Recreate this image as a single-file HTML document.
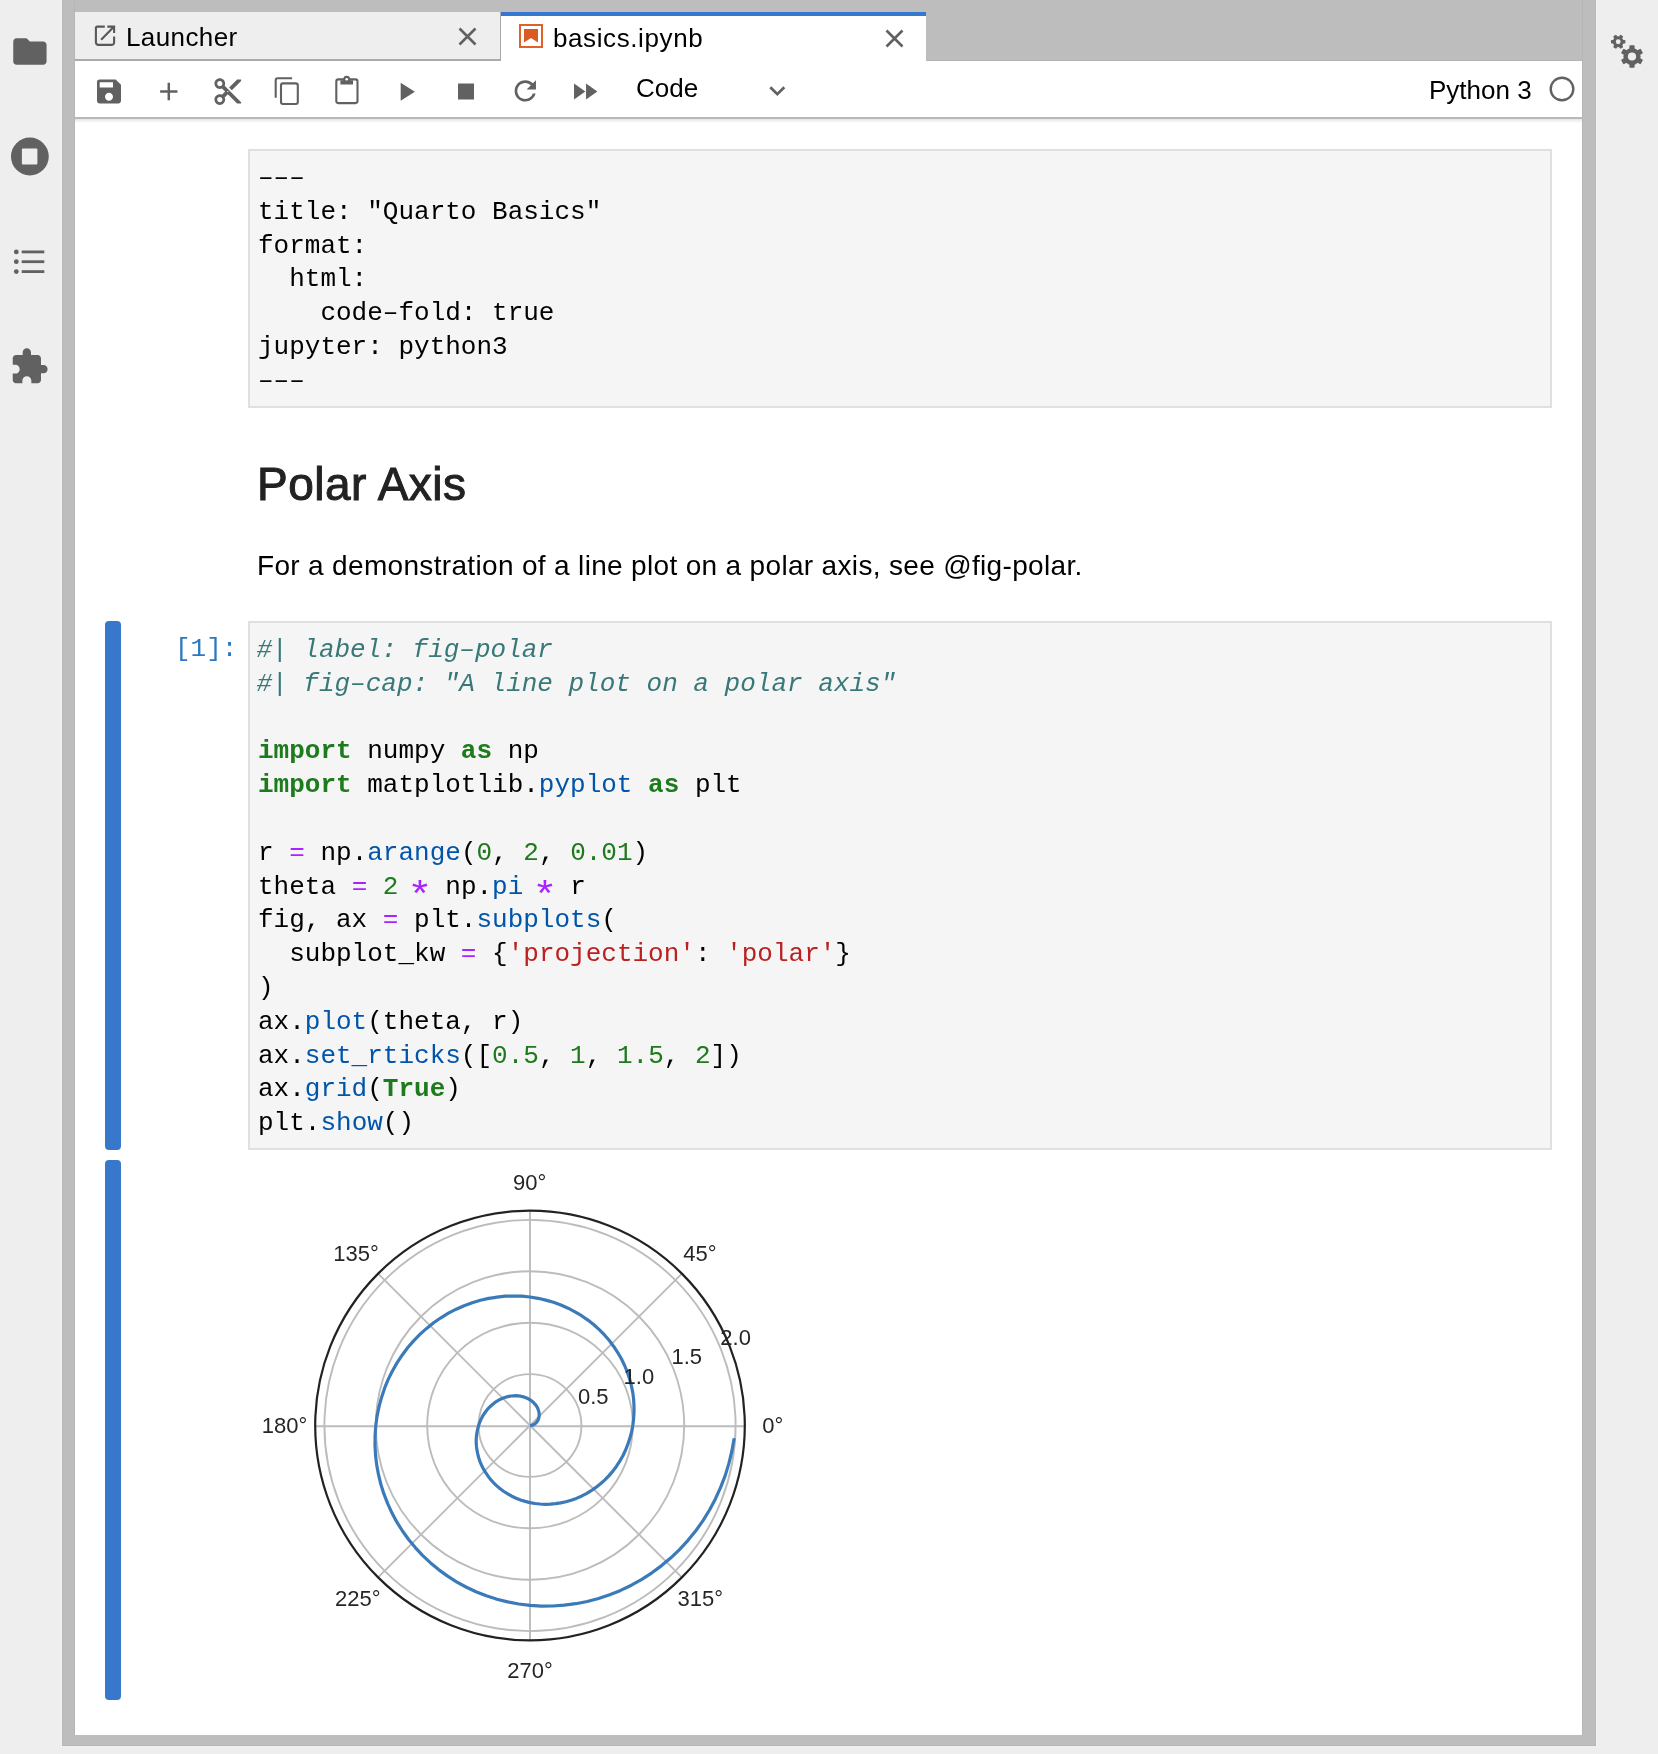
<!DOCTYPE html>
<html><head><meta charset="utf-8">
<style>
*{margin:0;padding:0;box-sizing:border-box}
html,body{width:1658px;height:1754px;overflow:hidden;background:#eeeeee;font-family:"Liberation Sans",sans-serif;position:relative}
.abs{position:absolute;will-change:transform}
.frame{left:62px;top:0;width:1534px;height:1746px;background:#bdbdbd}
.tab1{left:75px;top:12px;width:426px;height:49px;background:#eeeeee;border-right:1px solid #a9a9a9;border-bottom:2px solid #ababab}
.tab2{left:501px;top:12px;width:425px;height:50px;background:#fff;border-top:4px solid #3478d0}
.tabtext{font-size:26px;color:#000;white-space:nowrap;line-height:1}
.toolbar{left:75px;top:61px;width:1507px;height:58px;background:#fff;border-bottom:2px solid #b8b8b8}
.content{left:75px;top:119px;width:1507px;height:1616px;background:#fff}
.box{background:#f5f5f5;border:2px solid #e0e0e0}
.mono{font-family:"Liberation Mono",monospace;font-size:26px;line-height:33.8px;white-space:pre;color:#000}
.cm{color:#387878;font-style:italic;position:relative;left:-1.5px}
.kw{color:#1d7a1d;font-weight:bold}
.op{color:#aa22ff}
.nb{color:#1d7a1d}
.pr{color:#0055aa}
.st{color:#ba2121}
.ast{display:inline-block;transform:translate(-2px,10.8px) scale(1.62,1.43)}
.bar{left:105px;width:16px;background:#3878cc;border-radius:4px}
svg{position:absolute;overflow:visible;will-change:transform}
</style></head><body>
<div class="abs frame"></div>
<div class="abs" style="left:61px;top:0;width:1px;height:1747px;background:#f4f4f4"></div>
<div class="abs" style="left:62px;top:0;width:1px;height:1746px;background:#b6b6b6"></div>
<div class="abs" style="left:74px;top:0;width:1px;height:1735px;background:#b6b6b6"></div>
<div class="abs" style="left:1582px;top:0;width:1px;height:1735px;background:#b6b6b6"></div>
<div class="abs" style="left:1595px;top:0;width:1px;height:1746px;background:#b6b6b6"></div>
<div class="abs" style="left:1596px;top:0;width:1px;height:1747px;background:#f4f4f4"></div>
<div class="abs" style="left:62px;top:1745px;width:1534px;height:1px;background:#b6b6b6"></div>
<div class="abs" style="left:926px;top:60px;width:656px;height:1px;background:#b3b3b3"></div>
<!-- tabs -->
<div class="abs tab1"></div>
<div class="abs tab2"></div>
<div class="abs tabtext" style="left:126px;top:24px;letter-spacing:0.4px">Launcher</div>
<div class="abs tabtext" style="left:553px;top:25px;letter-spacing:0.6px">basics.ipynb</div>
<svg style="left:88px;top:20px" width="34" height="32" viewBox="0 0 34 32">
 <path d="M16.8 6.6H9A1.1 1.1 0 0 0 7.9 7.7V22.4A2.5 2.5 0 0 0 10.4 24.9H23.6A2.5 2.5 0 0 0 26.1 22.4V16.4" fill="none" stroke="#585858" stroke-width="2.1"/>
 <path d="M19.3 6.6H26.1V13.1M13.1 19.7L26.1 6.6" fill="none" stroke="#585858" stroke-width="2.1"/>
</svg>
<svg style="left:458px;top:27px" width="19" height="19" viewBox="0 0 19 19"><path d="M1.5 1.5L17.5 17.5M17.5 1.5L1.5 17.5" stroke="#616161" stroke-width="2.6"/></svg>
<svg style="left:885px;top:29px" width="19" height="19" viewBox="0 0 19 19"><path d="M1.5 1.5L17.5 17.5M17.5 1.5L1.5 17.5" stroke="#616161" stroke-width="2.6"/></svg>
<svg style="left:519px;top:24px" width="24" height="24" viewBox="0 0 24 24">
 <rect x="1" y="1" width="22" height="22" fill="#fff" stroke="#e0622a" stroke-width="2"/>
 <path d="M5 5h14v13.5l-7-4.6-7 4.6z" fill="#da5a24"/>
</svg>
<!-- toolbar -->
<div class="abs toolbar"></div>
<div class="abs content"></div>
<div class="abs" style="left:75px;top:119px;width:1507px;height:4px;background:linear-gradient(rgba(0,0,0,0.10),rgba(0,0,0,0))"></div>
<svg style="left:0;top:0" width="1658" height="130" viewBox="0 0 1658 130">
 <g fill="#616161">
  <g transform="translate(93 75.5) scale(1.3333)"><path d="M17 3H5a2 2 0 00-2 2v14c0 1.1.9 2 2 2h14c1.1 0 2-.9 2-2V7l-4-4zm-5 16c-1.66 0-3-1.34-3-3s1.34-3 3-3 3 1.34 3 3-1.34 3-3 3zm3-10H5V5h10v4z"/></g>
  <g transform="translate(152.8 75.5) scale(1.3333)"><path d="M19 13h-6v6h-2v-6H5v-2h6V5h2v6h6v2z" transform="translate(12 12) scale(0.93) translate(-12 -12)"/></g>
  <g transform="translate(211.8 75.6) scale(1.3333)"><path d="M9.64 7.64c.23-.5.36-1.05.36-1.64 0-2.210-1.79-4-4-4S2 3.79 2 6s1.79 4 4 4c.59 0 1.14-.13 1.64-.36L10 12l-2.36 2.36C7.14 14.13 6.59 14 6 14c-2.21 0-4 1.79-4 4s1.79 4 4 4 4-1.79 4-4c0-.59-.13-1.14-.36-1.640L12 14l7 7h3v-1L9.64 7.64zM6 8c-1.1 0-2-.89-2-2s.9-2 2-2 2 .89 2 2-.9 2-2 2zm0 12c-1.1 0-2-.89-2-2s.9-2 2-2 2 .89 2 2-.9 2-2 2zm6-7.5c-.28 0-.5-.22-.5-.5s.22-.5.5-.5.5.22.5.5-.22.5-.5.5zM19 3l-6 6 2 2 7-7V3z"/></g>
  <g transform="translate(390 75.7) scale(1.3333)"><path d="M8 5v14l11-7z" transform="translate(8 12) scale(0.97) translate(-8 -12)"/></g>
  <g transform="translate(450 75.5) scale(1.3333)"><path d="M6 6h12v12H6z"/></g>
  <g transform="translate(509.3 74.9) scale(1.3333)"><path d="M17.65 6.35C16.2 4.9 14.21 4 12 4c-4.42 0-7.99 3.58-7.99 8s3.57 8 7.99 8c3.730 0 6.84-2.55 7.73-6h-2.08c-.82 2.33-3.04 4-5.65 4-3.31 0-6-2.69-6-6s2.69-6 6-6c1.66 0 3.14.69 4.220 1.78L13 11h7V4l-2.35 2.35z"/></g>
  <g transform="translate(568.7 75.5) scale(1.3333)"><path d="M4 18l8.5-6L4 6v12zm9-12v12l8.5-6L13 6z"/></g>
 </g>
 <g fill="none" stroke="#616161" stroke-width="2.1">
  <path d="M275.7 97.7V80.2a2 2 0 0 1 2-2H292.1"/>
  <rect x="281" y="83.4" width="16.8" height="20.6" rx="2"/>
  <rect x="336.3" y="79.4" width="21.2" height="23.7" rx="2"/>
 </g>
 <path d="M340.4 80.3h12.6v4.2h-12.6z" fill="#616161"/>
 <circle cx="346.7" cy="79.2" r="3.4" fill="#616161"/><circle cx="346.7" cy="79.2" r="1.3" fill="#fff"/>
 <path d="M770.3 87.2l7 7 7-7" fill="none" stroke="#616161" stroke-width="2.7"/>
 <circle cx="1562" cy="89" r="11.3" fill="none" stroke="#616161" stroke-width="2.4"/>
</svg>
<div class="abs tabtext" style="left:636px;top:75px">Code</div>
<div class="abs tabtext" style="left:1429px;top:77px">Python 3</div>
<!-- left sidebar -->
<svg style="left:0;top:0" width="62" height="400" viewBox="0 0 62 400">
 <g fill="#616161">
  <g transform="translate(9.9 31.5) scale(1.6667)"><path d="M10 4H4c-1.1 0-1.99.9-1.99 2L2 18c0 1.1.9 2 2 2h16c1.1 0 2-.9 2-2V8c0-1.1-.9-2-2-2h-8l-2-2z"/></g>
  <circle cx="29.85" cy="156.5" r="18.9"/>
  <g transform="translate(9.4 346.7) scale(1.662)"><path d="M20.5 11H19V7c0-1.1-.9-2-2-2h-4V3.5C13 2.12 11.88 1 10.5 1S8 2.12 8 3.5V5H4c-1.1 0-1.99.9-1.99 2v3.8H3.5c1.49 0 2.7 1.21 2.7 2.7s-1.21 2.7-2.7 2.7H2V20c0 1.1.9 2 2 2h3.8v-1.5c0-1.49 1.21-2.7 2.7-2.7 1.49 0 2.7 1.21 2.7 2.7V22H17c1.1 0 2-.9 2-2v-4h1.5c1.38 0 2.5-1.12 2.5-2.5S21.88 11 20.5 11z"/></g>
  <circle cx="16.3" cy="251.9" r="2.4"/><circle cx="16.3" cy="261.7" r="2.4"/><circle cx="16.3" cy="271.6" r="2.4"/>
  <rect x="21.7" y="250.5" width="22.6" height="2.8"/><rect x="21.7" y="260.3" width="22.6" height="2.8"/><rect x="21.7" y="270.2" width="22.6" height="2.8"/>
 </g>
 <rect x="21.9" y="148.5" width="15.5" height="16" rx="1" fill="#eeeeee"/>
</svg>
<!-- right sidebar gears -->
<svg style="left:0;top:0" width="1658" height="80" viewBox="0 0 1658 80">
 <g fill="#616161">
<circle cx="1632" cy="56.5" r="8.6"/><rect x="1629.40" y="45.20" width="5.2" height="22.60" rx="0.8" transform="rotate(0.0 1632 56.5)"/><rect x="1629.40" y="45.20" width="5.2" height="22.60" rx="0.8" transform="rotate(60.0 1632 56.5)"/><rect x="1629.40" y="45.20" width="5.2" height="22.60" rx="0.8" transform="rotate(120.0 1632 56.5)"/>
<circle cx="1618.2" cy="41.75" r="5.4"/><rect x="1616.40" y="34.55" width="3.6" height="14.40" rx="0.8" transform="rotate(90.0 1618.2 41.75)"/><rect x="1616.40" y="34.55" width="3.6" height="14.40" rx="0.8" transform="rotate(150.0 1618.2 41.75)"/><rect x="1616.40" y="34.55" width="3.6" height="14.40" rx="0.8" transform="rotate(210.0 1618.2 41.75)"/>
 </g>
 <circle cx="1632" cy="56.5" r="4.1" fill="#eeeeee"/><circle cx="1618.2" cy="41.75" r="2.4" fill="#eeeeee"/>
</svg>
<!-- raw cell -->
<div class="abs box" style="left:248px;top:149px;width:1304px;height:259px"></div>
<div class="abs mono" style="left:258px;top:162px">–––
title: "Quarto Basics"
format:
  html:
    code–fold: true
jupyter: python3
–––</div>
<!-- markdown -->
<div class="abs" style="left:257px;top:461px;font-size:46px;line-height:1;color:#222;-webkit-text-stroke:1px #222;letter-spacing:0.5px;white-space:nowrap">Polar Axis</div>
<div class="abs" style="left:257px;top:552px;font-size:28px;line-height:1;color:#000;letter-spacing:0.33px;white-space:nowrap">For a demonstration of a line plot on a polar axis, see @fig-polar.</div>
<!-- code cell -->
<div class="abs bar" style="top:621px;height:529px"></div>
<div class="abs mono" style="left:175px;top:633px;color:#2b78c0">[1]:</div>
<div class="abs box" style="left:248px;top:621px;width:1304px;height:529px"></div>
<div class="abs mono" style="left:258px;top:634px"><span class="cm">#| label: fig–polar</span>
<span class="cm">#| fig–cap: "A line plot on a polar axis"</span>

<span class="kw">import</span> numpy <span class="kw">as</span> np
<span class="kw">import</span> matplotlib.<span class="pr">pyplot</span> <span class="kw">as</span> plt

r <span class="op">=</span> np.<span class="pr">arange</span>(<span class="nb">0</span>, <span class="nb">2</span>, <span class="nb">0.01</span>)
theta <span class="op">=</span> <span class="nb">2</span> <span class="op ast">*</span> np.<span class="pr">pi</span> <span class="op ast">*</span> r
fig, ax <span class="op">=</span> plt.<span class="pr">subplots</span>(
  subplot_kw <span class="op">=</span> {<span class="st">'projection'</span>: <span class="st">'polar'</span>}
)
ax.<span class="pr">plot</span>(theta, r)
ax.<span class="pr">set_rticks</span>([<span class="nb">0.5</span>, <span class="nb">1</span>, <span class="nb">1.5</span>, <span class="nb">2</span>])
ax.<span class="pr">grid</span>(<span class="kw">True</span>)
plt.<span class="pr">show</span>()</div>
<!-- output -->
<div class="abs bar" style="top:1160px;height:540px"></div>
<svg style="left:240px;top:1160px" width="560" height="540" viewBox="0 0 560 540">
 <g fill="none" stroke="#bcbcbc" stroke-width="1.9">
  <circle cx="290" cy="265.5" r="51.4"/><circle cx="290" cy="265.5" r="102.8"/><circle cx="290" cy="265.5" r="154.2"/><circle cx="290" cy="265.5" r="205.6"/>
  <path d="M290 266.2L504.8 266.2M290 266.2L75.2 266.2M290 265.5L290 50.7M290 265.5L290 480.3M290 265.5L441.9 113.6M290 265.5L138.1 113.6M290 265.5L138.1 417.4M290 265.5L441.9 417.4"/>
 </g>
 <path d="M290.0,265.5 L291.0,265.4 L292.0,265.2 L293.0,264.9 L294.0,264.5 L294.9,263.9 L295.7,263.2 L296.5,262.4 L297.2,261.5 L297.8,260.5 L298.3,259.5 L298.7,258.3 L299.0,257.1 L299.1,255.8 L299.2,254.4 L299.1,253.0 L298.8,251.6 L298.4,250.2 L297.9,248.8 L297.2,247.3 L296.4,245.9 L295.4,244.6 L294.2,243.3 L293.0,242.0 L291.5,240.9 L290.0,239.8 L288.3,238.8 L286.5,238.0 L284.6,237.2 L282.6,236.6 L280.5,236.2 L278.3,235.9 L276.0,235.7 L273.7,235.8 L271.3,236.0 L268.9,236.4 L266.4,237.0 L264.0,237.8 L261.5,238.8 L259.1,239.9 L256.7,241.3 L254.4,242.9 L252.2,244.7 L250.0,246.7 L247.9,248.8 L246.0,251.2 L244.2,253.7 L242.5,256.4 L241.0,259.3 L239.7,262.3 L238.6,265.5 L237.7,268.8 L237.0,272.2 L236.5,275.7 L236.2,279.3 L236.2,283.0 L236.5,286.7 L237.0,290.4 L237.8,294.2 L238.8,298.0 L240.1,301.8 L241.7,305.5 L243.5,309.1 L245.7,312.7 L248.1,316.2 L250.7,319.6 L253.6,322.8 L256.8,325.9 L260.2,328.8 L263.9,331.5 L267.8,333.9 L271.8,336.2 L276.1,338.2 L280.6,340.0 L285.2,341.4 L290.0,342.6 L294.9,343.5 L299.9,344.0 L305.0,344.3 L310.2,344.2 L315.4,343.7 L320.7,342.9 L325.9,341.8 L331.1,340.3 L336.3,338.4 L341.4,336.2 L346.4,333.6 L351.2,330.7 L355.9,327.4 L360.5,323.8 L364.9,319.9 L369.0,315.6 L372.9,311.1 L376.5,306.2 L379.8,301.1 L382.9,295.7 L385.6,290.0 L387.9,284.2 L389.9,278.1 L391.6,271.9 L392.8,265.5 L393.6,259.0 L394.0,252.4 L394.0,245.7 L393.6,238.9 L392.7,232.1 L391.3,225.4 L389.5,218.7 L387.3,212.0 L384.6,205.5 L381.5,199.0 L377.9,192.8 L373.9,186.7 L369.5,180.8 L364.7,175.2 L359.5,169.9 L353.9,164.8 L347.9,160.1 L341.6,155.7 L335.0,151.8 L328.1,148.2 L320.9,145.0 L313.5,142.3 L305.8,140.1 L298.0,138.3 L290.0,137.0 L281.9,136.2 L273.6,136.0 L265.3,136.2 L257.0,137.1 L248.7,138.4 L240.4,140.3 L232.2,142.7 L224.1,145.7 L216.2,149.2 L208.4,153.2 L200.9,157.8 L193.6,162.8 L186.6,168.4 L179.9,174.4 L173.6,180.9 L167.6,187.8 L162.1,195.2 L157.0,202.9 L152.4,211.0 L148.2,219.4 L144.6,228.2 L141.6,237.2 L139.1,246.4 L137.1,255.9 L135.8,265.5 L135.1,275.2 L135.0,285.1 L135.5,295.0 L136.7,304.9 L138.5,314.7 L140.9,324.5 L144.0,334.2 L147.7,343.7 L152.0,353.1 L156.9,362.2 L162.5,371.0 L168.6,379.5 L175.3,387.6 L182.5,395.4 L190.3,402.7 L198.6,409.6 L207.3,415.9 L216.5,421.8 L226.0,427.0 L236.0,431.7 L246.3,435.8 L256.9,439.2 L267.7,441.9 L278.8,444.0 L290.0,445.4 L301.4,446.1 L312.8,446.0 L324.3,445.2 L335.8,443.7 L347.2,441.5 L358.5,438.5 L369.7,434.8 L380.6,430.4 L391.4,425.2 L401.8,419.4 L411.9,412.8 L421.6,405.6 L430.9,397.8 L439.7,389.3 L448.0,380.3 L455.8,370.7 L463.0,360.6 L469.5,350.0 L475.4,338.9 L480.6,327.4 L485.2,315.6 L488.9,303.4 L491.9,291.0 L494.2,278.3" fill="none" stroke="#3a7ab8" stroke-width="3.2" stroke-linejoin="round"/>
 <circle cx="290" cy="265.5" r="214.8" fill="none" stroke="#222" stroke-width="2.2"/>
 <g font-family="Liberation Sans" font-size="22" fill="#262626" text-anchor="middle">
  <text x="289.6" y="30">90°</text>
  <text x="116" y="101">135°</text>
  <text x="460" y="101">45°</text>
  <text x="44.5" y="273">180°</text>
  <text x="532.8" y="273">0°</text>
  <text x="117.7" y="446">225°</text>
  <text x="460.3" y="446">315°</text>
  <text x="290" y="518">270°</text>
  <text x="495.6" y="185">2.0</text>
  <text x="446.7" y="204">1.5</text>
  <text x="398.9" y="224">1.0</text>
  <text x="353.3" y="244">0.5</text>
 </g>
</svg>
</body></html>
